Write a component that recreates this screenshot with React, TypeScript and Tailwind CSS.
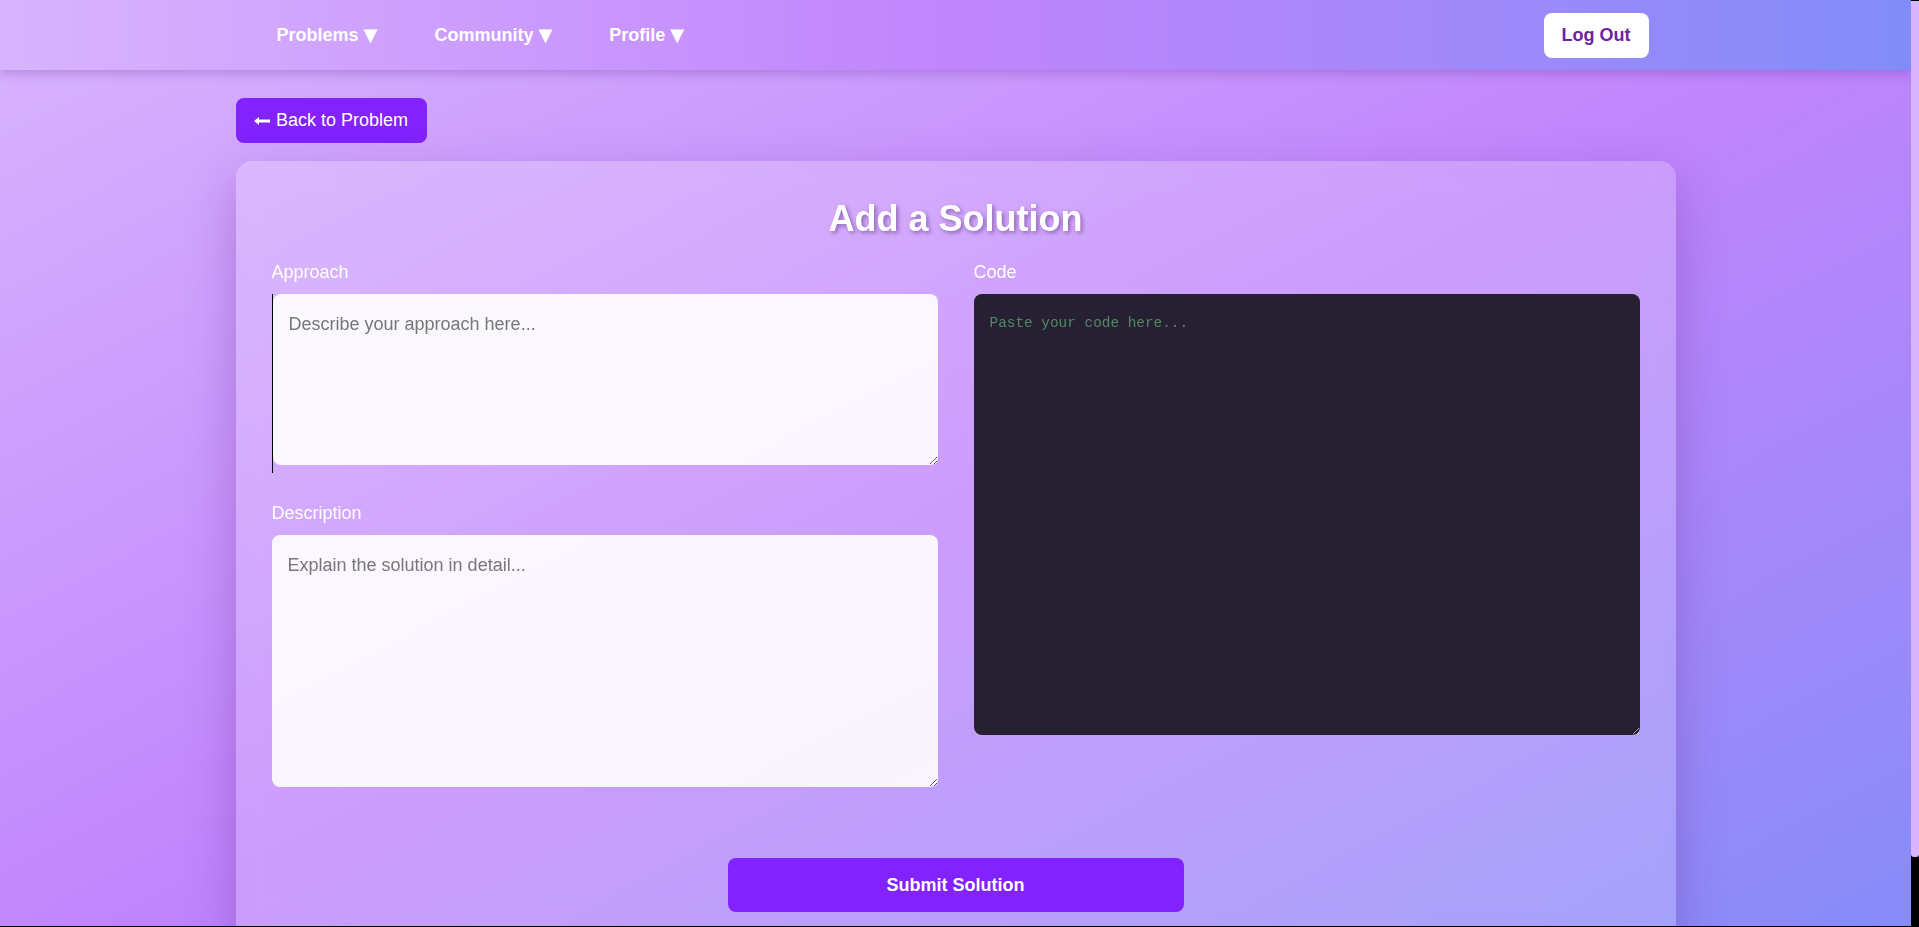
import { useState } from "react"

const font = "font-['Liberation_Sans',Arial,sans-serif]"

function Navbar() {
  const links = ["Problems", "Community", "Profile"]
  return (
    <nav className="h-[70px] w-full bg-linear-to-r from-[#d8b4fe] via-[#c084fc] to-[#818cf8] shadow-[0_4px_10px_rgba(88,28,135,0.25)] relative z-10">
      <div className="max-w-[1440px] mx-auto h-full flex items-center justify-between pl-[25px] pr-[27px]">
        <ul className="flex items-center gap-[25px]">
          {links.map((link) => (
            <li key={link}>
              <button className="px-4 py-2 text-white font-bold text-[18px] cursor-pointer">
                {link} <span className="font-['DejaVu_Sans',sans-serif] text-[18px]">▼</span>
              </button>
            </li>
          ))}
        </ul>
        <button className="bg-white text-[#6b21a8] font-bold text-[18px] rounded-lg w-[105px] h-[45px] cursor-pointer">
          Log Out
        </button>
      </div>
    </nav>
  )
}

function BackArrow() {
  return (
    <svg width="16" height="10" viewBox="0 0 16 10" className="shrink-0">
      <path d="M0 5 L5 1 L5 3.6 L16 3.6 L16 6.4 L5 6.4 L5 9 Z" fill="white" />
    </svg>
  )
}

export default function App() {
  const [approach, setApproach] = useState("")
  const [description, setDescription] = useState("")
  const [code, setCode] = useState("")

  return (
    <div className={`${font} h-screen flex flex-col`}>
      <div className="flex flex-1 min-h-0">
        <div className="flex-1 overflow-hidden">
          <div className="min-h-[1000px] bg-linear-to-br from-[#d8b4fe] via-[#c084fc] to-[#818cf8]">
            <Navbar />
            <main className="max-w-[1440px] mx-auto pt-7 pb-[52px]">
              <button className="bg-[#8122ff] text-white text-[18px] rounded-lg h-[45px] w-[191px] flex items-center justify-center gap-[6px] cursor-pointer">
                <BackArrow />
                <span>Back to Problem</span>
              </button>

              <div className="mt-[18px] rounded-2xl bg-white/20 backdrop-blur-md shadow-[0_20px_50px_rgba(88,28,135,0.3)] p-9">
                <h2 className="text-center text-white font-bold text-[36px] leading-[1.2] mb-[19px] [text-shadow:2px_2px_4px_rgba(60,20,90,0.45)]">
                  Add a Solution
                </h2>

                <div className="grid grid-cols-2 gap-9">
                  <div className="flex flex-col">
                    <label className="block text-white text-[18px] leading-[27px] mb-2">Approach</label>
                    <div className="border-l border-black pb-2">
                      <textarea
                        value={approach}
                        onChange={(e) => setApproach(e.target.value)}
                        placeholder="Describe your approach here..."
                        className="block w-full h-[171px] rounded-lg bg-white/90 p-4 text-[18px] leading-[1.6] text-gray-800 placeholder:text-[#777] outline-none"
                      />
                    </div>
                    <label className="block text-white text-[18px] leading-[27px] mt-[27px] mb-2">Description</label>
                    <textarea
                      value={description}
                      onChange={(e) => setDescription(e.target.value)}
                      placeholder="Explain the solution in detail..."
                      className="block w-full h-[252px] rounded-lg bg-white/90 p-4 text-[18px] leading-[1.6] text-gray-800 placeholder:text-[#777] outline-none"
                    />
                  </div>

                  <div className="flex flex-col">
                    <label className="block text-white text-[18px] leading-[27px] mb-2">Code</label>
                    <textarea
                      value={code}
                      onChange={(e) => setCode(e.target.value)}
                      placeholder="Paste your code here..."
                      spellCheck={false}
                      className="block w-full h-[441px] rounded-lg bg-[#272033] px-4 pt-[18px] pb-4 font-['Liberation_Mono',monospace] text-[14.4px] leading-[1.6] text-[#6fbf8f] placeholder:text-[#4f8a63] outline-none"
                    />
                  </div>
                </div>

                <div className="flex justify-center mt-[71px]">
                  <button className="w-1/3 h-[54px] bg-[#8122ff] text-white font-bold text-[18px] rounded-lg cursor-pointer">
                    Submit Solution
                  </button>
                </div>
              </div>
            </main>
          </div>
        </div>
        {/* scrollbar */}
        <div className="w-2 bg-black pt-px">
          <div className="h-[856px] bg-[#d8b4fe] rounded-b-[3px]" />
        </div>
      </div>
      <div className="h-px bg-black" />
    </div>
  )
}
